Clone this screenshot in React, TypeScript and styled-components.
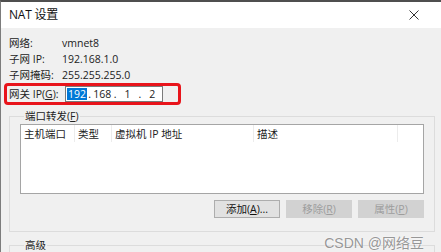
import styled, { createGlobalStyle } from "styled-components";

const GlobalStyle = createGlobalStyle`
    html, body {
        margin: 0;
        padding: 0;
        background: #f0f0f0;
    }
    #root {
        width: 441px;
        height: 252px;
        overflow: hidden;
    }
`;

const FONT = `"Open Sans", "Noto Sans CJK SC", sans-serif`;

const Janela = styled.div`
    position: relative;
    box-sizing: border-box;
    width: 441px;
    height: 252px;
    display: flex;
    flex-direction: column;
    overflow: hidden;
    border-top: 2px solid #4f4f4f;
    border-left: 1px solid #7c7c7c;
    font-family: ${FONT};
    font-size: 10.5px;
    line-height: 14px;
    color: #222;
`;
const TitleBar = styled.div`
    height: 26px;
    flex: none;
    background: #ffffff;
    display: flex;
    align-items: center;
    justify-content: space-between;
    padding: 0 22px 0 8px;
`;
const Title = styled.span`
    font-size: 12px;
    color: #111;
    letter-spacing: -0.2px;
`;
const Corpo = styled.div`
    flex: 1;
    background: #f0f0f0;
    padding: 7px 6px 0 3px;
    display: flex;
    flex-direction: column;
`;
const Info = styled.div`
    display: grid;
    grid-template-columns: 53px auto;
    grid-auto-rows: 16px;
    align-items: center;
    padding-left: 5px;
`;
const Gateway = styled.div`
    box-sizing: border-box;
    width: 177px;
    height: 22px;
    border: 3px solid #e8141b;
    border-radius: 4px;
    display: flex;
    align-items: center;
    padding-left: 2px;
`;
const GatewayLabel = styled.span`
    width: 56px;
    flex: none;
    white-space: nowrap;
`;
const IpBox = styled.div`
    box-sizing: border-box;
    width: 98px;
    height: 16px;
    border: 1px solid #7a7a7a;
    background: #fff;
    display: flex;
    align-items: center;
    padding-left: 1px;
`;
const Octeto = styled.span`
    width: 20px;
    display: flex;
    justify-content: center;
`;
const Selecao = styled.span<{ $ativo?: boolean }>`
    padding: 0 1px;
    line-height: 12px;
    background: ${p => (p.$ativo ? "#0078d7" : "transparent")};
    color: ${p => (p.$ativo ? "#fff" : "#222")};
`;
const Ponto = styled.span`
    width: 5.5px;
    text-align: center;
`;
const Grupo = styled.fieldset<{ $topo: number }>`
    margin: ${p => p.$topo}px 0 0 5px;
    padding: 1px 10px 13px 10px;
    border: 1px solid #dcdcdc;
    border-radius: 0;
    min-width: 0;
`;
const Legenda = styled.legend`
    padding: 0 1px;
    margin-left: 4px;
    height: 14px;
    line-height: 14px;
`;
const Lista = styled.div`
    box-sizing: border-box;
    height: 70px;
    border: 1px solid #a5a5a5;
    background: #ffffff;
`;
const Cabecalho = styled.div`
    display: flex;
    height: 17px;
`;
const Coluna = styled.div<{ $largura: number }>`
    width: ${p => p.$largura}px;
    flex: none;
    box-sizing: border-box;
    padding-left: 3px;
    border-right: 1px solid #ececec;
    display: flex;
    align-items: center;
    white-space: nowrap;
`;
const Botoes = styled.div`
    display: flex;
    justify-content: flex-end;
    gap: 6px;
    margin-top: 6px;
`;
const Botao = styled.button<{ $desativado?: boolean }>`
    box-sizing: border-box;
    width: 66px;
    height: 18px;
    padding: 0;
    font-family: ${FONT};
    font-size: 10.5px;
    line-height: 14px;
    background: ${p => (p.$desativado ? "#d2d2d2" : "#e1e1e1")};
    border: 1px solid ${p => (p.$desativado ? "#d2d2d2" : "#adadad")};
    color: ${p => (p.$desativado ? "#9d9d9d" : "#111")};
`;
const U = styled.span`
    text-decoration: underline;
`;
const Marca = styled.div`
    position: absolute;
    right: 17px;
    bottom: 1px;
    font-family: "Liberation Sans", "Noto Sans CJK SC", sans-serif;
    font-size: 14px;
    line-height: 16px;
    color: rgba(125, 125, 125, 0.8);
    text-shadow: 0 0 2px #fff;
`;

const colunas = [
    { nome: "主机端口", largura: 54 },
    { nome: "类型", largura: 37 },
    { nome: "虚拟机 IP 地址", largura: 142 },
    { nome: "描述", largura: 144 },
];

const App: React.FC = () => {
    const ip = ["192", "168", "1", "2"];
    return (
        <>
            <GlobalStyle />
            <Janela>
                <TitleBar>
                    <Title>NAT 设置</Title>
                    <svg width="10" height="10" viewBox="0 0 10 10">
                        <path d="M0.5 0.5 L9.5 9.5 M9.5 0.5 L0.5 9.5" stroke="#333" strokeWidth="1" />
                    </svg>
                </TitleBar>
                <Corpo>
                    <Info>
                        <span>网络:</span>
                        <span>vmnet8</span>
                        <span>子网 IP:</span>
                        <span>192.168.1.0</span>
                        <span>子网掩码:</span>
                        <span>255.255.255.0</span>
                    </Info>
                    <Gateway>
                        <GatewayLabel>网关 IP(<U>G</U>):</GatewayLabel>
                        <IpBox>
                            {ip.map((o, i) => (
                                <>
                                    {i > 0 && <Ponto key={"p" + i}>.</Ponto>}
                                    <Octeto key={o + i}>
                                        <Selecao $ativo={i === 0}>{o}</Selecao>
                                    </Octeto>
                                </>
                            ))}
                        </IpBox>
                    </Gateway>
                    <Grupo $topo={4}>
                        <Legenda>端口转发(<U>F</U>)</Legenda>
                        <Lista>
                            <Cabecalho>
                                {colunas.map(c => (
                                    <Coluna key={c.nome} $largura={c.largura}>{c.nome}</Coluna>
                                ))}
                            </Cabecalho>
                        </Lista>
                        <Botoes>
                            <Botao>添加(<U>A</U>)...</Botao>
                            <Botao $desativado>移除(<U>R</U>)</Botao>
                            <Botao $desativado>属性(<U>P</U>)</Botao>
                        </Botoes>
                    </Grupo>
                    <Grupo $topo={6}>
                        <Legenda>高级</Legenda>
                        <Lista />
                    </Grupo>
                </Corpo>
                <Marca>CSDN @网络豆</Marca>
            </Janela>
        </>
    );
};

export default App;
